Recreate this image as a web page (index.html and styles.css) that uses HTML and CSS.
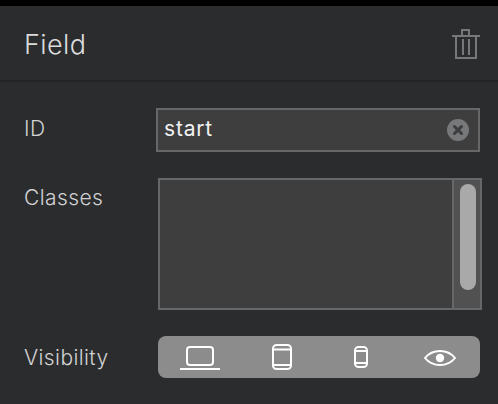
FILE: index.html
```html
<!DOCTYPE html>
<html lang="en">
<head>
  <meta charset="UTF-8">
  <title>Field</title>
  <link rel="stylesheet" href="styles.css">
</head>
<body>
  <div class="panel">
    <div class="panel-header">
      <h1>Field</h1>
      <svg class="trash" width="28" height="32" viewBox="0 0 28 32" fill="none" stroke="#77787a" stroke-width="2">
        <path d="M0 8h28M10 8V2h7v6M4 8v22h20V8M11 11v16M17 11v16"/>
      </svg>
    </div>

    <div class="panel-body">
      <div class="row row-id">
        <label>ID</label>
        <div class="text-input">
          <span class="value">start</span>
          <span class="clear">
            <svg width="22" height="22" viewBox="0 0 22 22">
              <circle cx="11" cy="11" r="11" fill="#77787a"/>
              <path d="M7.500 7.500l7 7M14.500 7.500l-7 7" stroke="#3d3d3e" stroke-width="3" stroke-linecap="round"/>
            </svg>
          </span>
        </div>
      </div>

      <div class="row row-classes">
        <label>Classes</label>
        <div class="text-area">
          <div class="area-content"></div>
          <div class="scroll-track"><div class="scroll-thumb"></div></div>
        </div>
      </div>

      <div class="row row-visibility">
        <label>Visibility</label>
        <div class="visibility">
          <svg class="icon-laptop" width="40" height="26" viewBox="0 0 40 26" fill="none" stroke="#fff" stroke-width="2">
            <rect x="7" y="3" width="26" height="18" rx="3"/>
            <path d="M0 25h40"/>
          </svg>
          <svg class="icon-tablet" width="20" height="26" viewBox="0 0 20 26" fill="none" stroke="#fff" stroke-width="2">
            <rect x="1" y="1" width="18" height="24" rx="3.500"/>
            <path d="M1 5.500h18M1 21h18"/>
          </svg>
          <svg class="icon-phone" width="14" height="22" viewBox="0 0 14 22" fill="none" stroke="#fff" stroke-width="2">
            <rect x="1" y="1" width="12" height="20" rx="3.500"/>
            <path d="M1 5h12M1 17h12"/>
          </svg>
          <svg class="icon-eye" width="32" height="18" viewBox="0 0 32 18" fill="none" stroke="#fff" stroke-width="2">
            <path d="M1 10C5 5 10 3 16 3s11 2 15 7c-4 5-9 7-15 7S5 15 1 10z"/>
            <circle cx="16" cy="10" r="4.200" fill="#fff" stroke="none"/>
          </svg>
        </div>
      </div>
    </div>
  </div>
</body>
</html>
```

FILE: styles.css
```css
html, body {
  margin: 0;
  height: 100%;
}
body {
  background-color: #2b2c2e;
  font-family: Inter, "Noto Sans", sans-serif;
  color: #d2d2d3;
  overflow: hidden;
}
.panel {
  border-top: 6px solid #000;
}
.panel-header {
  height: 74px;
  border-bottom: 2px solid #222325;
  padding: 0 18px 0 24px;
  display: flex;
  justify-content: space-between;
  align-items: center;
}
h1 {
  margin: 2px 0 0;
  font-size: 27px;
  font-weight: 300;
  letter-spacing: 0.4px;
  color: #dcdcdd;
}
.trash {
  margin-top: 2px;
}
.panel-body {
  padding-left: 24px;
}
.row {
  display: flex;
}
label {
  font-size: 21px;
  font-weight: 300;
  letter-spacing: 0.4px;
}
.row-id {
  margin-top: 26px;
  align-items: center;
}
.row-id label {
  width: 132px;
  margin-top: -4px;
}
.text-input {
  width: 324px;
  height: 44px;
  box-sizing: border-box;
  border: 2px solid #666768;
  background-color: #3e3e3f;
  display: flex;
  align-items: center;
  justify-content: space-between;
  padding-left: 6px;
}
.value {
  font-size: 21px;
  letter-spacing: 0.8px;
  color: #f2f2f2;
  margin-top: -4px;
}
.clear {
  display: flex;
  margin-right: 9px;
}
.row-classes {
  margin-top: 26px;
}
.row-classes label {
  width: 134px;
  margin-top: 7px;
}
.text-area {
  width: 324px;
  height: 132px;
  box-sizing: border-box;
  border: 2px solid #666768;
  display: flex;
}
.area-content {
  flex: 1;
  background-color: #3e3e3f;
}
.scroll-track {
  width: 28px;
  box-sizing: border-box;
  background-color: #515152;
  border-left: 2px solid #666768;
  padding: 4px 0 0 6px;
}
.scroll-thumb {
  width: 16px;
  height: 106px;
  border-radius: 8px;
  background-color: #a9a9a9;
}
.row-visibility {
  margin-top: 26px;
  align-items: center;
}
.row-visibility label {
  width: 134px;
}
.visibility {
  width: 322px;
  height: 42px;
  box-sizing: border-box;
  border-radius: 8px;
  background-color: #8c8c8c;
  display: flex;
  align-items: center;
}
.icon-laptop {
  margin-left: 22px;
}
.icon-tablet {
  margin-left: 52px;
}
.icon-phone {
  margin-left: 62px;
}
.icon-eye {
  margin-left: 56px;
}
```
